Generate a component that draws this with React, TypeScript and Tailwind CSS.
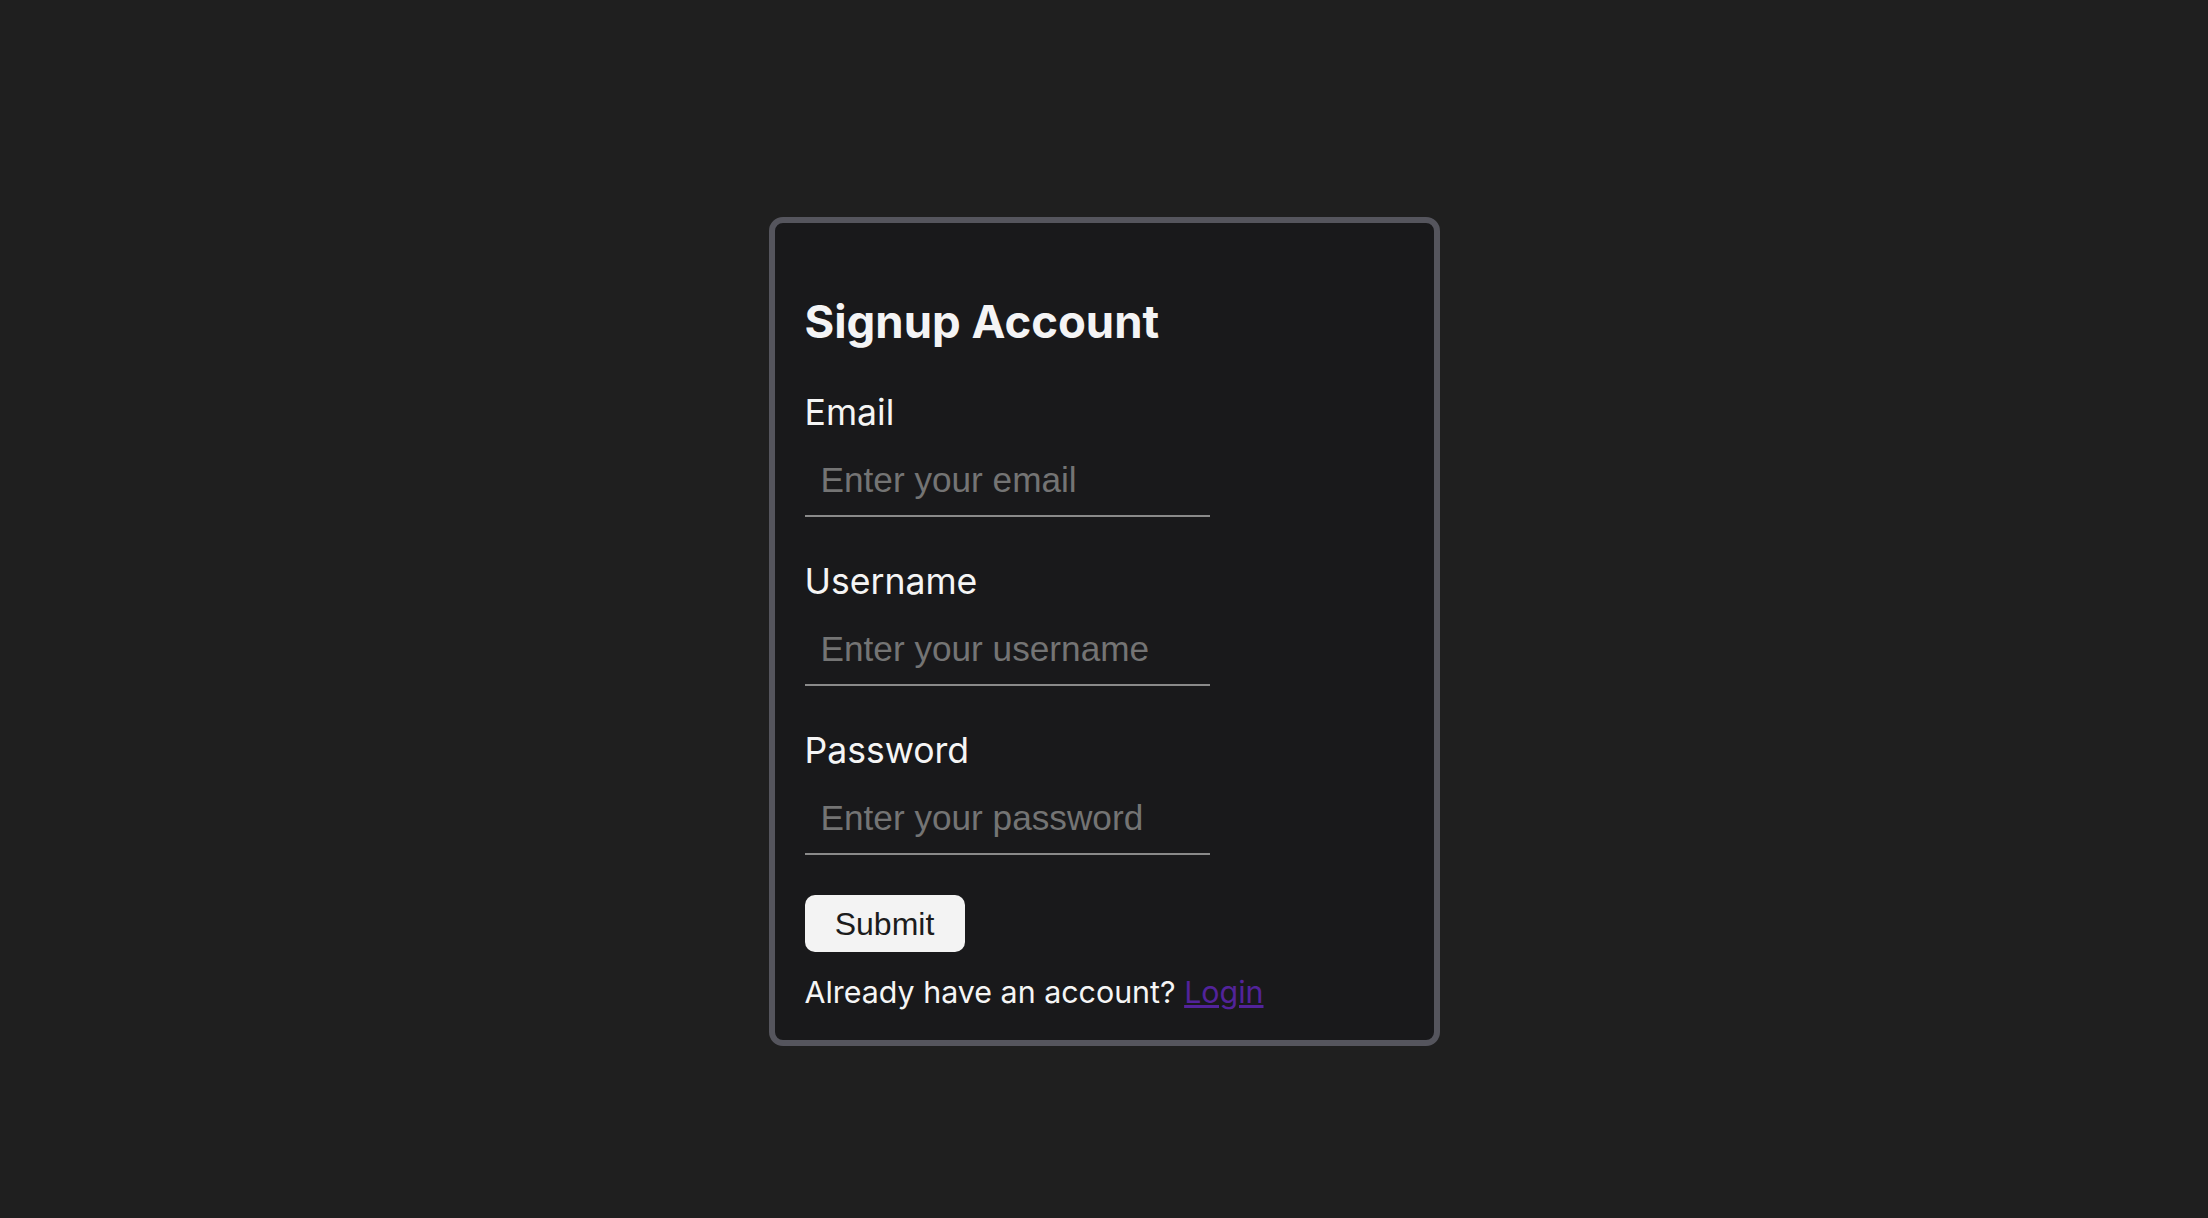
import React, { useState } from 'react';

const fields = [
  { name: 'email', label: 'Email', type: 'email', placeholder: 'Enter your email' },
  { name: 'username', label: 'Username', type: 'text', placeholder: 'Enter your username' },
  { name: 'password', label: 'Password', type: 'password', placeholder: 'Enter your password' },
];

const App = () => {
  const [form, setForm] = useState<Record<string, string>>({ email: '', username: '', password: '' });

  const handleChange = (name: string, value: string) => {
    setForm((prev) => ({ ...prev, [name]: value }));
  };

  return (
    <div className="min-h-screen bg-[#1f1f1f] pt-[217px] font-['Inter',sans-serif]">
      <div className="mx-auto w-[671px] rounded-[14px] border-[6px] border-[#55555d] bg-[#19191b] pl-[30px] pr-8 pt-[73px] pb-[29px] text-[#f5f5f5]">
        <h1 className="text-[45.5px] font-bold leading-[52px] text-[#f4f4f5]">Signup Account</h1>

        {fields.map((field) => (
          <div key={field.name} className="mt-[43px]">
            <label htmlFor={field.name} className="block text-[35.6px] leading-[44px]">
              {field.label}
            </label>
            <input
              id={field.name}
              type={field.type}
              value={form[field.name]}
              onChange={(e) => handleChange(field.name, e.target.value)}
              placeholder={field.placeholder}
              className="mt-[10px] block h-[72px] w-[405px] border-b-2 border-[#8a8a8a] bg-transparent pl-4 font-['Liberation_Sans',Arial,sans-serif] text-[35.2px] text-[#f5f5f5] outline-none placeholder:text-[#747474]"
            />
          </div>
        ))}

        <button
          type="submit"
          className="mt-[40px] block h-[57px] w-[160px] rounded-[10px] bg-[#f3f3f3] font-['Liberation_Sans',Arial,sans-serif] text-[32px] text-[#1c1c1c]"
        >
          Submit
        </button>

        <p className="mt-[21px] text-[30.4px] leading-[38px]">
          Already have an account?{' '}
          <a href="#" className="text-[#52239a] underline">
            Login
          </a>
        </p>
      </div>
    </div>
  );
};

export default App;
